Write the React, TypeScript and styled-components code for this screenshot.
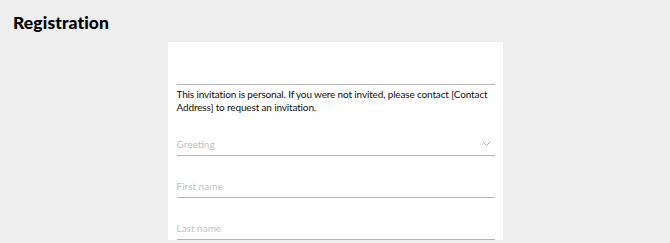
import styled, { createGlobalStyle } from "styled-components";

const GlobalStyle = createGlobalStyle`
  html, body {
    margin: 0;
    padding: 0;
    background-color: #eeeeee;
    font-family: Lato, "Open Sans", sans-serif;
  }
`;

const fields = [
  { label: "Greeting", select: true },
  { label: "First name", select: false },
  { label: "Last name", select: false },
];

const App = () => {
  return (
    <>
      <GlobalStyle />
      <Page>
        <Title>Registration</Title>
        <Card>
          <TopRule />
          <Notice>
            This invitation is personal. If you were not invited, please contact [Contact
            Address] to request an invitation.
          </Notice>
          {fields.map((field) => (
            <Field key={field.label}>
              <Placeholder>{field.label}</Placeholder>
              {field.select && (
                <svg width="9" height="6" viewBox="0 0 9 6">
                  <path d="M1 1l3.5 3.5L8 1" fill="none" stroke="#aaaaaa" strokeWidth="1" />
                </svg>
              )}
            </Field>
          ))}
        </Card>
      </Page>
    </>
  );
};

const Page = styled.div`
  padding: 12px 0 0;
  min-height: 243px;
  box-sizing: border-box;
`;

const Title = styled.h1`
  margin: 0 0 8px 13px;
  font-family: Lato, sans-serif;
  font-size: 17.5px;
  font-weight: 900;
  color: #000;
  line-height: 22px;
  letter-spacing: 0.1px;
`;

const Card = styled.div`
  width: 335px;
  margin: 0 auto;
  background-color: #ffffff;
  padding: 42px 8px 0 9px;
  box-sizing: border-box;
`;

const TopRule = styled.div`
  height: 1px;
  background-color: #b5b5b5;
`;

const Notice = styled.p`
  margin: 3px 0 0;
  font-size: 10px;
  line-height: 13px;
  letter-spacing: -0.15px;
  color: #111;
`;

const Field = styled.div`
  display: flex;
  align-items: center;
  justify-content: space-between;
  height: 22px;
  margin-top: 19px;
  padding: 0 4px 0 0;
  border-bottom: 1px solid #b5b5b5;
  &:first-of-type {
    margin-top: 18px;
  }
`;

const Placeholder = styled.span`
  font-size: 10px;
  color: #c4c4c4;
`;

export default App;
